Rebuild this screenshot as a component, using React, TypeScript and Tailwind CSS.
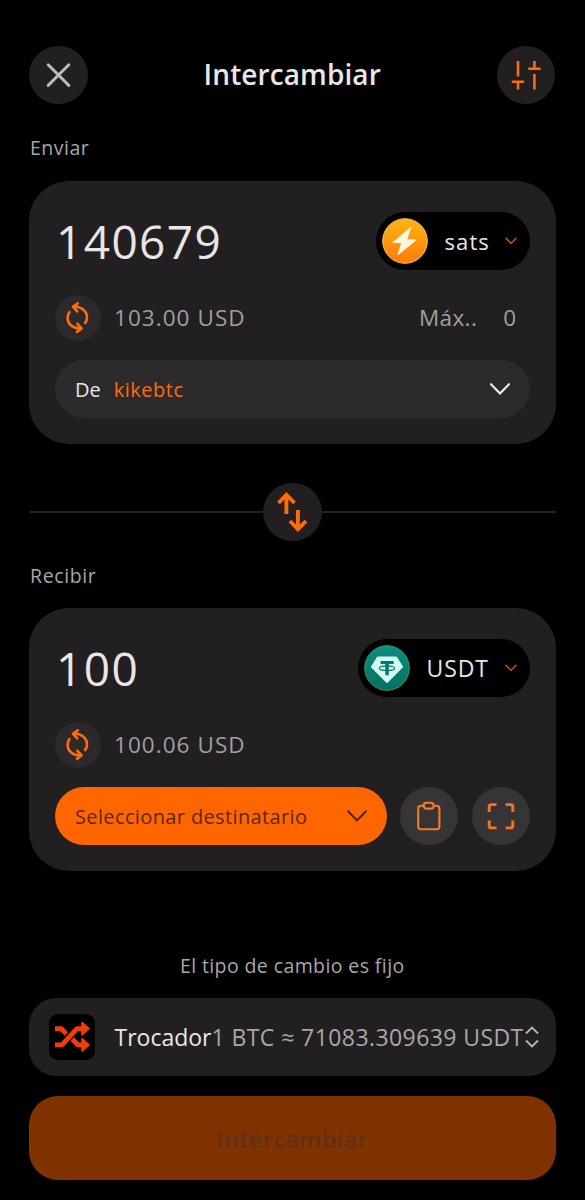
import type { ReactNode } from "react";

const FONT = "font-['Open_Sans','Noto_Sans',sans-serif]";

function CloseIcon() {
  return (
    <svg width="58" height="58" viewBox="0 0 58 58" fill="none">
      <path d="M19.2 18.8 39.8 39.4M39.8 18.8 19.2 39.4" stroke="#bdbcbd" strokeWidth="2.9" strokeLinecap="round" />
    </svg>
  );
}

function SlidersIcon() {
  return (
    <svg width="58" height="58" viewBox="0 0 58 58" fill="none">
      <path
        d="M21 15v15.4M14.8 35.8h12.4M21 35.8v7.7M37.4 15v7.7M31.2 22.7h12.4M37.4 28v15.5"
        stroke="#ff6a0a"
        strokeWidth="2.6"
      />
    </svg>
  );
}

function SyncIcon() {
  return (
    <svg width="46" height="46" viewBox="0 0 46 46" fill="none">
      <g stroke="#ff6a0a" strokeWidth="2.7" strokeLinecap="round" strokeLinejoin="round">
        <path d="M22.7 8.4 18 11.8l4.2 4.6M18.6 11.8c7.6-.6 13.4 4.2 13.4 10.7 0 2.2-.7 4.1-1.9 5.5" />
        <path d="M21.9 36.8 26.6 33.4l-4.2-4.6M26 33.4c-7.6.6-13.4-4.2-13.4-10.7 0-2.2.7-4.1 1.900-5.500" />
      </g>
    </svg>
  );
}

function SwapIcon() {
  return (
    <svg width="58" height="58" viewBox="0 0 58 58" fill="none">
      <path
        d="M23.4 31V11.5M15.5 20l7.9-8.2 8.1 8.2M34.900 27v19.500M27 38l7.900 8.200L43 38"
        stroke="#ff6a0a"
        strokeWidth="3.9"
      />
    </svg>
  );
}

function Chevron({ width, height, stroke, color }: { width: number; height: number; stroke: number; color: string }) {
  return (
    <svg width={width} height={height} viewBox={`0 0 ${width} ${height}`} fill="none" className="shrink-0">
      <path
        d={`M1 1.2 ${width / 2} ${height - 1.6} ${width - 1} 1.2`}
        stroke={color}
        strokeWidth={stroke}
        strokeLinecap="round"
      />
    </svg>
  );
}

function ClipboardIcon() {
  return (
    <svg width="58" height="58" viewBox="0 0 58 58" fill="none" stroke="#f87a2c" strokeWidth="2.1">
      <path d="M23.5 18.8h-2.7a2.6 2.6 0 0 0-2.6 2.6v18.2a2.6 2.6 0 0 0 2.6 2.6h16a2.6 2.6 0 0 0 2.6-2.6V21.4a2.6 2.6 0 0 0-2.6-2.6h-2.7" />
      <rect x="23.8" y="15.8" width="9.8" height="5.8" rx="2.6" />
    </svg>
  );
}

function ScanIcon() {
  return (
    <svg width="58" height="58" viewBox="0 0 58 58" fill="none">
      <path
        d="M17.2 25v-5.4a2 2 0 0 1 2-2h5.400M33.600 17.600h5.200a2 2 0 0 1 2 2V25M40.800 33.500v5.400a2 2 0 0 1-2 2h-5.200M24.600 40.900h-5.400a2 2 0 0 1-2-2v-5.400"
        stroke="#f87422"
        strokeWidth="2.9"
      />
    </svg>
  );
}

function SatsCoin() {
  return (
    <svg width="46" height="46" viewBox="0 0 46 46">
      <defs>
        <linearGradient id="sats" x1="0" y1="0" x2="0" y2="1">
          <stop offset="0" stopColor="#fbb615" />
          <stop offset="1" stopColor="#ff7a08" />
        </linearGradient>
      </defs>
      <circle cx="23" cy="23" r="22.3" fill="url(#sats)" stroke="#ffc558" strokeWidth="1" />
      <path
        d="M28.8 9.5 10.7 24.6h9.1L16 36.8 34 21.9h-9.3z"
        fill="#fff6de"
        stroke="#fff6de"
        strokeWidth="1"
        strokeLinejoin="round"
      />
    </svg>
  );
}

function TetherCoin() {
  return (
    <svg width="46" height="46" viewBox="0 0 46 46">
      <defs>
        <linearGradient id="usdt" x1="0" y1="0" x2="0" y2="1">
          <stop offset="0" stopColor="#0c8f83" />
          <stop offset="1" stopColor="#07705f" />
        </linearGradient>
      </defs>
      <circle cx="23" cy="23" r="22.3" fill="url(#usdt)" stroke="#2d9c79" strokeWidth="1" />
      <path d="M13.5 12h19l6.2 10L23 37.8 7.3 22z" fill="#d2fff0" stroke="#d2fff0" strokeWidth="1" strokeLinejoin="round" />
      <path d="M16.5 15.9h13.2v3.2h-4.9v11.2h-3.5V19.1h-4.8z" fill="#08796b" />
      <ellipse cx="23" cy="23.2" rx="7.7" ry="2.3" fill="none" stroke="#08796b" strokeWidth="1.2" />
    </svg>
  );
}

function ShuffleLogo() {
  return (
    <svg width="46" height="46" viewBox="0 0 46 46" fill="none" className="shrink-0">
      <rect width="46" height="46" rx="9" fill="#000" />
      <path
        d="M6 14.7h6.3l5 5.2M6 30.9h7L28 14.7h5M23.3 25l5.5 5.9H33"
        stroke="#f23c04"
        strokeWidth="4.9"
        strokeLinejoin="round"
      />
      <path
        d="M33 8.5v12.4l7-6.2zM33 24.7v12.4l7-6.2z"
        fill="#f23c04"
        stroke="#f23c04"
        strokeWidth="1.6"
        strokeLinejoin="round"
      />
    </svg>
  );
}

function UpDownIcon() {
  return (
    <svg width="14" height="22" viewBox="0 0 14 22" fill="none" className="shrink-0">
      <path d="M1 7.5 7 1.5l6 6M1 14.5l6 6 6-6" stroke="#b8b6b8" strokeWidth="1.8" />
    </svg>
  );
}

function RoundButton({ label, className, children }: { label: string; className: string; children: ReactNode }) {
  return (
    <button type="button" aria-label={label} className={`shrink-0 overflow-hidden rounded-full ${className}`}>
      {children}
    </button>
  );
}

type AmountCardProps = {
  amount: string;
  unit: string;
  unitClass: string;
  coin: ReactNode;
  fiat: string;
  max?: string;
  children: ReactNode;
};

function AmountCard({ amount, unit, unitClass, coin, fiat, max, children }: AmountCardProps) {
  return (
    <section className="h-[263px] rounded-[40px] bg-[#221f20] px-[26px] pt-[30.5px]">
      <div className="flex h-[58px] items-center justify-between">
        <span className="pt-px pl-px text-[46px] leading-none tracking-[1.4px] text-[#e8e6e7]">{amount}</span>
        <button type="button" className="flex h-[58px] items-center rounded-full bg-black pr-[13px] pl-[6px]">
          {coin}
          <span className={`ml-[16px] text-left text-[#e8e6e7] ${unitClass}`}>{unit}</span>
          <Chevron width={12} height={8} stroke={1.3} color="#e8590f" />
        </button>
      </div>
      <div className="mt-[25px] flex h-[46px] items-center text-[22.5px] text-[#a19fa0]">
        <RoundButton label="Cambiar moneda" className="size-[46px] bg-[#2b292b]">
          <SyncIcon />
        </RoundButton>
        <span className="ml-[13px] tracking-[1.05px]">{fiat}</span>
        {max && (
          <span className="mr-[13px] ml-auto flex gap-[26px] tracking-[0.4px]">
            <span>Máx..</span>
            <span>{max}</span>
          </span>
        )}
      </div>
      <div className="mt-[19px]">{children}</div>
    </section>
  );
}

export default function App() {
  return (
    <main className={`flex h-[1200px] w-[585px] flex-col bg-black pt-[46px] pr-[29.5px] pl-[29px] ${FONT}`}>
      <header className="flex h-[58px] items-center justify-between">
        <RoundButton label="Cerrar" className="size-[58.5px] bg-[#221f20]">
          <CloseIcon />
        </RoundButton>
        <h1 className="pb-[2px] text-[28px] font-semibold tracking-[0.1px] text-[#e8e6e7]">Intercambiar</h1>
        <RoundButton label="Ajustes" className="size-[58.5px] bg-[#221f20]">
          <SlidersIcon />
        </RoundButton>
      </header>

      <h2 className="mt-[29px] h-[30px] pl-px text-[19.5px] leading-[30px] tracking-[0.5px] text-[#a9a7a8]">Enviar</h2>
      <div className="mt-[18px]">
        <AmountCard
          amount="140679"
          unit="sats"
          unitClass="w-[61px] pt-px pl-px text-[22px] tracking-[1.1px]"
          coin={<SatsCoin />}
          fiat="103.00 USD"
          max="0"
        >
          <button type="button" className="flex h-[58px] w-full items-center rounded-full bg-[#2c2a2d] pr-[20px] pl-[20px] text-[20px]">
            <span className="pt-[3px] text-[#e8e6e7]">De</span>
            <span className="mr-auto ml-[13px] pt-[3px] tracking-[0.5px] text-[#ff6a0a]">kikebtc</span>
            <Chevron width={20} height={12} stroke={2.1} color="#f0eff0" />
          </button>
        </AmountCard>
      </div>

      <div className="mt-[39px] flex h-[58px] items-center">
        <span className="h-[2px] flex-1 bg-[#242223]" />
        <RoundButton label="Invertir" className="size-[58.5px] bg-[#221f20]">
          <SwapIcon />
        </RoundButton>
        <span className="h-[2px] flex-1 bg-[#242223]" />
      </div>

      <h2 className="mt-[20px] h-[30px] pl-px text-[19.5px] leading-[30px] tracking-[0.6px] text-[#a9a7a8]">Recibir</h2>
      <div className="mt-[17px]">
        <AmountCard
          amount="100"
          unit="USDT"
          unitClass="w-[79px] pl-px pt-px text-[23px] tracking-[0.9px]"
          coin={<TetherCoin />}
          fiat="100.06 USD"
        >
          <div className="flex items-center gap-[13.5px]">
            <button type="button" className="flex h-[58px] flex-1 items-center justify-between rounded-full bg-[#ff6600] pr-[20px] pl-[20px] text-[20px] text-[#59290f]">
              <span className="pt-[3px] tracking-[0.37px]">Seleccionar destinatario</span>
              <Chevron width={20} height={12} stroke={2} color="#4a2412" />
            </button>
            <RoundButton label="Pegar" className="size-[58px] bg-[#363435]">
              <ClipboardIcon />
            </RoundButton>
            <RoundButton label="Escanear" className="size-[58px] bg-[#363435]">
              <ScanIcon />
            </RoundButton>
          </div>
        </AmountCard>
      </div>

      <p className="mt-[80px] h-[30px] text-center text-[19.5px] leading-[30px] tracking-[0.4px] text-[#a9a7a8]">
        El tipo de cambio es fijo
      </p>

      <button type="button" className="mt-[17px] flex h-[78px] items-center rounded-[27px] bg-[#221f20] pr-[17px] pl-[20px] text-[23px] whitespace-nowrap">
        <ShuffleLogo />
        <span className="ml-[19.5px] w-[97px] text-left text-[#e8e6e7]">Trocador</span>
        <span className="w-0 flex-1 text-left tracking-[0.42px] text-[#a9a7a9]">1 BTC ≈ 71083.309639 USDT</span>
        <UpDownIcon />
      </button>

      <button type="button" disabled className="mt-[20px] h-[84px] rounded-[29px] bg-[#803300] pt-[3px] text-[23.5px] font-semibold tracking-[0.3px] text-[#603018]">
        Intercambiar
      </button>
    </main>
  );
}
